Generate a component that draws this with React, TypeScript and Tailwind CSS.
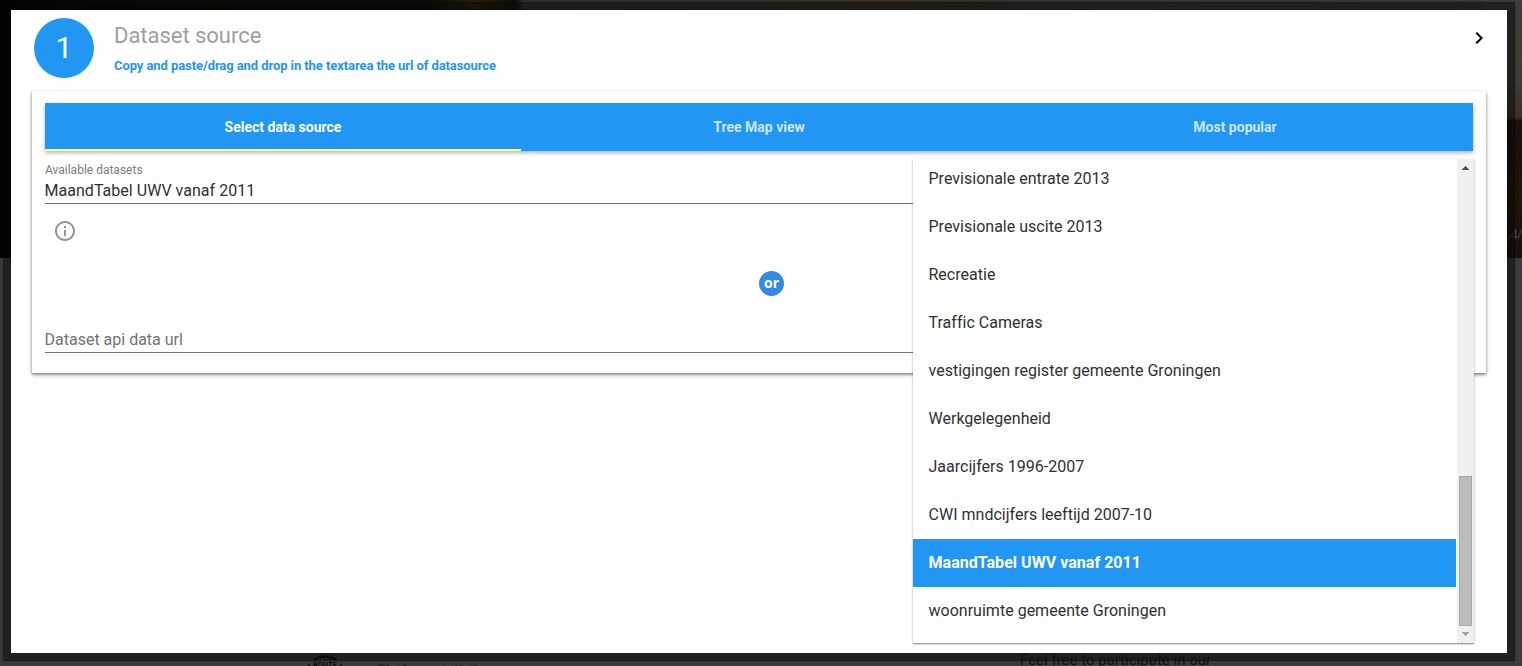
import React from "react";

const tabs = ["Select data source", "Tree Map view", "Most popular"];
const options = [
  "Previsionale entrate 2013",
  "Previsionale uscite 2013",
  "Recreatie",
  "Traffic Cameras",
  "vestigingen register gemeente Groningen",
  "Werkgelegenheid",
  "Jaarcijfers 1996-2007",
  "CWI mndcijfers leeftijd 2007-10",
  "MaandTabel UWV vanaf 2011",
  "woonruimte gemeente Groningen",
];

function Backdrop() {
  return (
    <div className="absolute inset-0 flex flex-col bg-[#3d3d3d]">
      <div className="h-[258px] w-full bg-[linear-gradient(90deg,#020202_0px,#0b0c07_110px,#0d0d08_430px,#2a2210_475px,#121108_515px,#353432_525px,#39332c_900px,#3a3a38_1200px,#3c3c38_1522px)]">
        <div className="ml-auto h-full w-[40px] bg-[linear-gradient(180deg,#3c3f3c_0px,#403e36_80px,#3b352a_117px,#17110b_121px,#20170e_200px,#17120c_258px)]" />
      </div>
      <span className="absolute right-0 top-[226px] font-['Liberation_Serif',serif] text-[15px] leading-4 text-[#4a5560]">.4/</span>
    </div>
  );
}

function FooterText() {
  return (
    <div className="absolute inset-x-0 top-[653px] h-[13px] overflow-hidden text-[#101010]">
      <svg className="absolute left-[306px] top-[2px]" width="38" height="11" viewBox="0 0 38 11">
        <path d="M8 5Q18-2 30 5" stroke="#0b0b0b" strokeWidth="2.5" fill="none" />
        <path d="M2 10h2M34 10h2" stroke="#0b0b0b" strokeWidth="1.5" />
        <text x="7" y="12" fontSize="8" textLength="24" lengthAdjust="spacingAndGlyphs" fontWeight="700" fill="#0b0b0b" fontFamily="Roboto, sans-serif">ROUTE</text>
      </svg>
      <span className="absolute left-[377px] top-[9px] whitespace-nowrap text-[14px] leading-4 text-[#0c2b2d]">Platform statistics</span>
      <span className="absolute left-[1020px] top-[-1px] whitespace-nowrap text-[15px] leading-4">Feel free to participate in our</span>
    </div>
  );
}

function DatasetMenu() {
  return (
    <div className="absolute left-[868px] top-[56px] flex h-[484px] w-[561px] bg-white shadow-[0_1px_3px_rgba(0,0,0,0.2),0_1px_1px_rgba(0,0,0,0.3)]">
      <ul className="-mt-1 h-[484px] w-[543px] [font-variant-ligatures:none]">
        {options.map((option, i) => (
          <li
            key={option}
            className={
              i === 8
                ? "flex h-12 items-center bg-[#2196f3] px-[15.5px] text-[16px] font-bold tracking-[0.03px] text-white"
                : "flex h-12 items-center px-[15.5px] text-[16px] tracking-[0.015px] text-[#303030]"
            }
          >
            {option}
          </li>
        ))}
      </ul>
      <div className="ml-px flex w-[17px] flex-col items-center bg-[#f0f0f0]">
        <svg width="17" height="17" viewBox="0 0 17 17" shapeRendering="crispEdges">
          <path d="M8 7h1v1h1v1h1v1h1v1H5v-1h1V9h1V8h1z" fill="#505050" />
        </svg>
        <div className="mt-[300px] h-[150px] w-[13px] border border-[#a8a8a8] bg-[#bcbcbc]" />
        <svg width="17" height="17" viewBox="0 0 17 17" shapeRendering="crispEdges">
          <path d="M5 6h7v1h-1v1h-1v1H9v1H8V9H7V8H6V7H5z" fill="#a0a0a0" />
        </svg>
      </div>
    </div>
  );
}

export default function App() {
  return (
    <div className="relative h-[666px] w-[1522px] overflow-hidden pl-[3px] pt-[2px] font-['Roboto',sans-serif]">
      <Backdrop />
      <main className="relative h-[659px] w-[1512px] border-8 border-[rgba(4,4,4,0.5)] bg-white bg-clip-padding shadow-[0_0_6px_rgba(0,0,0,0.25)]">
        <header className="flex h-[81px] pl-[23px] pt-2">
          <div className="flex size-[60px] items-center justify-center rounded-full bg-[#2196f3] pb-0.5 text-[30px] text-white">1</div>
          <div className="ml-5 flex flex-col">
            <h1 className="mt-1 text-[22px] leading-7 tracking-[-0.03px] text-[#9e9e9e]">Dataset source</h1>
            <p className="mt-[7px] text-[13px] font-bold leading-[18px] tracking-[-0.08px] text-[#2196f3]">
              Copy and paste/drag and drop in the textarea the url of datasource
            </p>
          </div>
          <svg className="ml-auto mr-4 mt-2 size-6" viewBox="0 0 24 24">
            <path d="M10 6L8.59 7.41 13.17 12l-4.58 4.59L10 18l6-6z" fill="#000" />
          </svg>
        </header>
        <section className="ml-[21px] h-[282px] w-[1454px] bg-white px-[13px] pt-3 shadow-[0_2px_4px_rgba(0,0,0,0.35),0_1px_2px_rgba(0,0,0,0.3)]">
          <div className="relative">
            <nav className="grid h-12 w-[1428px] grid-cols-3 bg-[#2196f3] text-[14px] font-bold text-[#cde7fc] shadow-[0_2px_4px_rgba(0,0,0,0.3)]">
              {tabs.map((tab, i) => (
                <button
                  key={tab}
                  className={i === 0 ? "border-b-2 border-[#ffff8d] pt-0.5 text-white" : ""}
                >
                  {tab}
                </button>
              ))}
            </nav>
            <div className="flex h-[53px] flex-col border-b border-[#737373] pt-3">
              <label className="text-[12px] leading-[14px] text-[#7d7d7d]">Available datasets</label>
              <span className="-ml-[0.5px] mt-0.5 text-[16px] leading-6 tracking-[0.03px] text-[#303030]">MaandTabel UWV vanaf 2011</span>
            </div>
            <svg className="ml-2 mt-[15px] block size-6" viewBox="0 0 24 24">
              <path d="M11 17h2v-6h-2v6zm1-15C6.48 2 2 6.48 2 12s4.48 10 10 10 10-4.48 10-10S17.52 2 12 2zm0 18c-4.41 0-8-3.59-8-8s3.59-8 8-8 8 3.59 8 8-3.59 8-8 8zM11 9h2V7h-2v2z" fill="#949494" />
            </svg>
            <div className="ml-[714px] mt-7 flex size-[25px] items-center justify-center rounded-full bg-[#3388e8] pb-0.5 font-['Open_Sans',sans-serif] text-[14px] font-bold text-white">or</div>
            <div className="-indent-[0.5px] mt-8 h-[25px] border-b border-[#737373] text-[16px] leading-6 text-[#737373]">Dataset api data url</div>
            <DatasetMenu />
          </div>
        </section>
      </main>
      <FooterText />
    </div>
  );
}
